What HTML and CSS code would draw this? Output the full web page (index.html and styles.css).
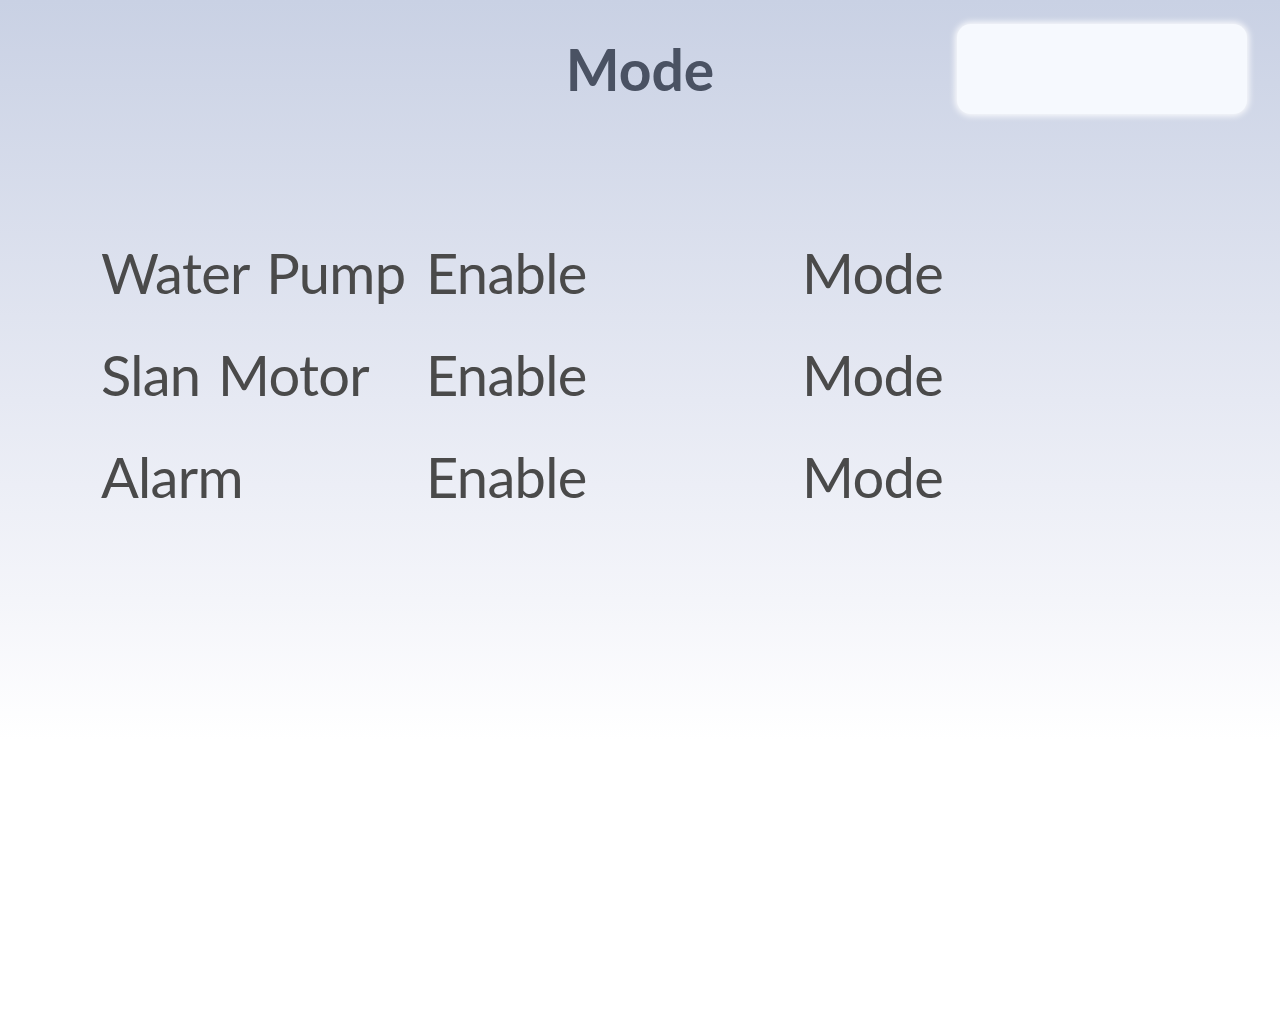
FILE: index.html
```html
<!DOCTYPE html>
<html lang="en">
<head>
    <meta charset="UTF-8">
    <title>Mode</title>
    <link rel="stylesheet" href="styles.css">
</head>
<body>
<div class="page">
    <div class="header">
        <div></div>
        <h1 class="title">Mode</h1>
        <div class="status-box"></div>
    </div>
    <div class="list">
        <div class="name">Water Pump</div>
        <div class="cell">Enable</div>
        <div class="cell">Mode</div>

        <div class="name">Slan Motor</div>
        <div class="cell">Enable</div>
        <div class="cell">Mode</div>

        <div class="name">Alarm</div>
        <div class="cell">Enable</div>
        <div class="cell">Mode</div>
    </div>
</div>
</body>
</html>
```

FILE: styles.css
```css
* {
    padding: 0;
    margin: 0;
    box-sizing: border-box;
}

body {
    font-family: Lato, "Open Sans", sans-serif;
    background: #fff;
}

.page {
    height: 1024px;
    background: linear-gradient(#c9d1e4 0, #e6e9f3 400px, #f4f5fa 600px, #fff 740px, #fff 100%);
}

.header {
    display: grid;
    grid-template-columns: 1fr auto 1fr;
    align-items: center;
    height: 140px;
}

.title {
    font-size: 57px;
    font-weight: 700;
    color: #4a5263;
    text-align: center;
    margin-top: -2px;
}

.status-box {
    justify-self: end;
    width: 290px;
    height: 90px;
    margin: -2px 33px 0 0;
    border-radius: 14px;
    background: #f6f9fe;
    box-shadow: 0 0 6px 2px rgba(255, 255, 255, 0.9);
}

.list {
    display: grid;
    grid-template-columns: 325px 376px auto;
    row-gap: 30px;
    padding: 97px 0 0 101px;
    color: #4a4a4a;
    font-size: 56px;
    line-height: 72px;
    letter-spacing: -0.7px;
    word-spacing: 4px;
}
```
